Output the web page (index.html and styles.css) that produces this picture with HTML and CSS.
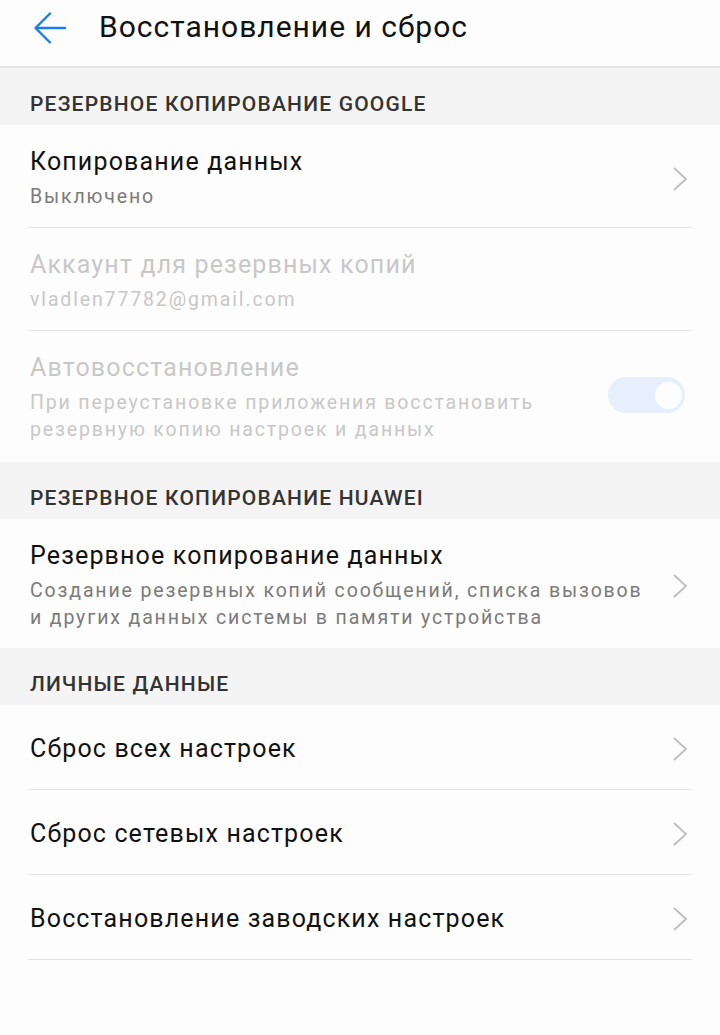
FILE: index.html
```html
<!DOCTYPE html>
<html lang="ru">
<head>
<meta charset="utf-8">
<title>Восстановление и сброс</title>
<link rel="stylesheet" href="styles.css">
</head>
<body>
<header class="appbar">
  <svg class="back" viewBox="0 0 34 34" width="34" height="34">
    <path d="M32 17H3M17 2.5L2.5 17L17 31.5" fill="none" stroke="#1a7ee6" stroke-width="2.4" stroke-linecap="round" stroke-linejoin="round"/>
  </svg>
  <h1 class="appbar-title">Восстановление и сброс</h1>
</header>

<section>
  <div class="group-title">РЕЗЕРВНОЕ КОПИРОВАНИЕ GOOGLE</div>
  <div class="item">
    <div class="item-text">
      <div class="item-title">Копирование данных</div>
      <div class="item-sub">Выключено</div>
    </div>
    <svg class="chev" viewBox="0 0 16 26" width="16" height="26"><path d="M2 2L14 13L2 24" fill="none" stroke="#bdbdbd" stroke-width="1.8"/></svg>
  </div>
  <div class="item disabled">
    <div class="item-text">
      <div class="item-title">Аккаунт для резервных копий</div>
      <div class="item-sub">vladlen77782@gmail.com</div>
    </div>
  </div>
  <div class="item disabled last">
    <div class="item-text">
      <div class="item-title">Автовосстановление</div>
      <div class="item-sub">При переустановке приложения восстановить<br>резервную копию настроек и данных</div>
    </div>
    <div class="switch"><span class="knob"></span></div>
  </div>
</section>

<section>
  <div class="group-title">РЕЗЕРВНОЕ КОПИРОВАНИЕ HUAWEI</div>
  <div class="item last tight">
    <div class="item-text">
      <div class="item-title">Резервное копирование данных</div>
      <div class="item-sub">Создание резервных копий сообщений, списка вызовов<br>и других данных системы в памяти устройства</div>
    </div>
    <svg class="chev" viewBox="0 0 16 26" width="16" height="26"><path d="M2 2L14 13L2 24" fill="none" stroke="#bdbdbd" stroke-width="1.8"/></svg>
  </div>
</section>

<section>
  <div class="group-title">ЛИЧНЫЕ ДАННЫЕ</div>
  <div class="item single">
    <div class="item-text"><div class="item-title">Сброс всех настроек</div></div>
    <svg class="chev" viewBox="0 0 16 26" width="16" height="26"><path d="M2 2L14 13L2 24" fill="none" stroke="#bdbdbd" stroke-width="1.8"/></svg>
  </div>
  <div class="item single">
    <div class="item-text"><div class="item-title">Сброс сетевых настроек</div></div>
    <svg class="chev" viewBox="0 0 16 26" width="16" height="26"><path d="M2 2L14 13L2 24" fill="none" stroke="#bdbdbd" stroke-width="1.8"/></svg>
  </div>
  <div class="item single">
    <div class="item-text"><div class="item-title">Восстановление заводских настроек</div></div>
    <svg class="chev" viewBox="0 0 16 26" width="16" height="26"><path d="M2 2L14 13L2 24" fill="none" stroke="#bdbdbd" stroke-width="1.8"/></svg>
  </div>
</section>
</body>
</html>
```

FILE: styles.css
```css
html, body {
  margin: 0;
  padding: 0;
  background: #fdfdfd;
  font-family: Roboto, "Noto Sans", "Liberation Sans", sans-serif;
  color: #111;
}

.appbar {
  height: 66px;
  display: flex;
  align-items: center;
  padding-left: 33px;
  border-bottom: 2px solid #e4e4e4;
  box-sizing: content-box;
}

.back {
  display: block;
  margin-top: -10px;
}

.appbar-title {
  margin: -12px 0 0 32px;
  font-size: 30px;
  font-weight: 400;
  line-height: 36px;
  letter-spacing: 1px;
  color: #111;
}

.group-title {
  background: #f4f4f4;
  height: 57px;
  box-sizing: border-box;
  padding: 24px 0 0 30px;
  font-size: 21px;
  line-height: 25px;
  font-weight: 500;
  letter-spacing: 1.2px;
  color: #333;
}

.item {
  margin: 0 28px;
  padding: 22px 0 17px 2px;
  border-bottom: 1px solid #e3e3e3;
  display: flex;
  align-items: center;
}

.item.last {
  border-bottom: none;
  padding-bottom: 19px;
}

.item.last.tight {
  padding-bottom: 17px;
}

.item.single {
  padding: 3px 0 0 2px;
  height: 85px;
  box-sizing: border-box;
}

.item-text {
  flex: 1;
}

.item-title {
  font-size: 25px;
  line-height: 30px;
  letter-spacing: 1.15px;
  color: #111;
}

.item-sub {
  margin-top: 6px;
  font-size: 19.5px;
  line-height: 27px;
  letter-spacing: 1.85px;
  color: #7b7b7b;
}

.disabled .item-title,
.disabled .item-sub {
  color: #c8c8c8;
}

.chev {
  display: block;
  margin-right: 4px;
  flex: none;
}

.switch {
  flex: none;
  width: 77px;
  height: 36px;
  border-radius: 18px;
  background: #e7effc;
  position: relative;
  margin-right: 7px;
  margin-top: -6px;
}

.knob {
  position: absolute;
  right: 3px;
  top: 4.5px;
  width: 27px;
  height: 27px;
  border-radius: 50%;
  background: #fdfdfd;
}
```
